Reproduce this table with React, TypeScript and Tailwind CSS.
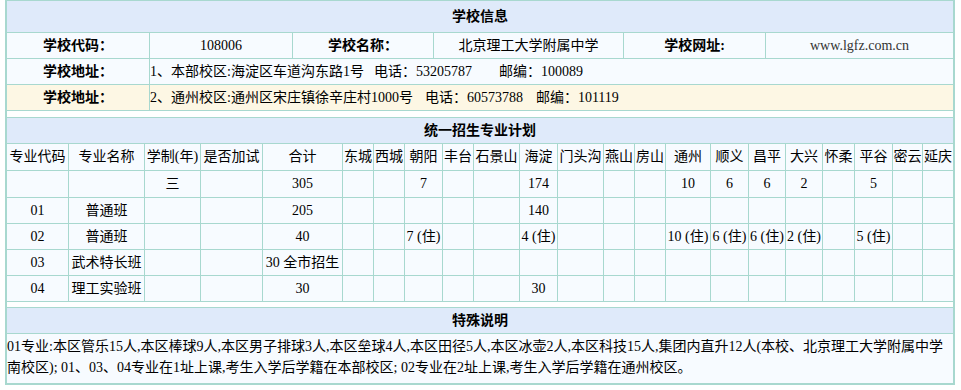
import React from "react";

const B = "bg-[#a8d8cf]";

function H({ children, cls = "" }: { children: React.ReactNode; cls?: string }) {
  return (
    <div className={`bg-[#dfeafa] flex items-center justify-center font-bold text-[14px] text-black ${cls}`}>
      {children}
    </div>
  );
}

function C({ children, cls = "" }: { children?: React.ReactNode; cls?: string }) {
  return (
    <div className={`bg-[#f7fbff] flex items-center justify-center whitespace-nowrap overflow-hidden ${cls}`}>
      {children}
    </div>
  );
}

const heads = [
  "专业代码",
  "专业名称",
  "学制(年)",
  "是否加试",
  "合计",
  "东城",
  "西城",
  "朝阳",
  "丰台",
  "石景山",
  "海淀",
  "门头沟",
  "燕山",
  "房山",
  "通州",
  "顺义",
  "昌平",
  "大兴",
  "怀柔",
  "平谷",
  "密云",
  "延庆",
];

const rows: string[][] = [
  ["", "", "三", "", "305", "", "", "7", "", "", "174", "", "", "", "10", "6", "6", "2", "", "5", "", ""],
  ["01", "普通班", "", "", "205", "", "", "", "", "", "140", "", "", "", "", "", "", "", "", "", "", ""],
  ["02", "普通班", "", "", "40", "", "", "7 (住)", "", "", "4 (住)", "", "", "", "10 (住)", "6 (住)", "6 (住)", "2 (住)", "", "5 (住)", "", ""],
  ["03", "武术特长班", "", "", "30 全市招生", "", "", "", "", "", "", "", "", "", "", "", "", "", "", "", "", ""],
  ["04", "理工实验班", "", "", "30", "", "", "", "", "", "30", "", "", "", "", "", "", "", "", "", "", ""],
];

export default function App() {
  return (
    <div className="bg-white w-[961px] h-[390px] font-['Liberation_Serif','Noto_Sans_CJK_SC',serif] text-[14px] text-black leading-none">
      <div className="ml-[5px] w-[950px] border-x-2 border-b-2 border-[#a8d8cf] bg-white">
        {/* table 1 */}
        <div
          className={`grid grid-cols-[142px_142px_140px_189px_141px_187px] grid-rows-[31px_25px_25px_25px] gap-px ${B} border-y border-[#a8d8cf]`}
        >
          <H cls="col-span-6">学校信息</H>
          <C cls="font-bold">学校代码：</C>
          <C>108006</C>
          <C cls="font-bold">学校名称：</C>
          <C>北京理工大学附属中学</C>
          <C cls="font-bold">学校网址:</C>
          <C cls="text-[#333]">www.lgfz.com.cn</C>
          <C cls="font-bold">学校地址：</C>
          <C cls="col-span-5 !justify-start">
            1、本部校区:海淀区车道沟东路1号<span className="inline-block w-[10px]" />电话：53205787
            <span className="inline-block w-[27px]" />邮编：100089
          </C>
          <C cls="font-bold !bg-[#fdf7e4]">学校地址：</C>
          <C cls="col-span-5 !justify-start !bg-[#fdf7e4]">
            2、通州校区:通州区宋庄镇徐辛庄村1000号<span className="inline-block w-[12px]" />电话：60573788
            <span className="inline-block w-[13px]" />邮编：101119
          </C>
        </div>
        <div className="h-[6px]" />
        {/* table 2 */}
        <div
          className={`grid grid-cols-[61px_75px_55px_61px_79px_30px_30px_37px_30px_45px_37px_45px_30px_30px_44px_37px_36px_36px_31px_37px_29px_30px] grid-rows-[25px_26px_26px_25px_25px_25px_25px] gap-px ${B} border-y border-[#a8d8cf]`}
        >
          <H cls="col-span-22">统一招生专业计划</H>
          {heads.map((h, i) => (
            <C key={"h" + i}>{h}</C>
          ))}
          {rows.map((r, ri) =>
            r.map((v, ci) => <C key={ri + "-" + ci}>{v}</C>)
          )}
        </div>
        <div className="h-[5px]" />
        {/* table 3 */}
        <div className={`grid grid-rows-[25px_49px] gap-px ${B} border-t border-[#a8d8cf]`}>
          <H>特殊说明</H>
          <div className="bg-[#f7fbff] leading-[21px] pt-[2px] whitespace-nowrap">
            <div>
              01专业:本区管乐15人,本区棒球9人,本区男子排球3人,本区垒球4人,本区田径5人,本区冰壶2人,本区科技15人,集团内直升12人(本校、北京理工大学附属中学
            </div>
            <div>南校区); 01、03、04专业在1址上课,考生入学后学籍在本部校区; 02专业在2址上课,考生入学后学籍在通州校区。</div>
          </div>
        </div>
      </div>
    </div>
  );
}
